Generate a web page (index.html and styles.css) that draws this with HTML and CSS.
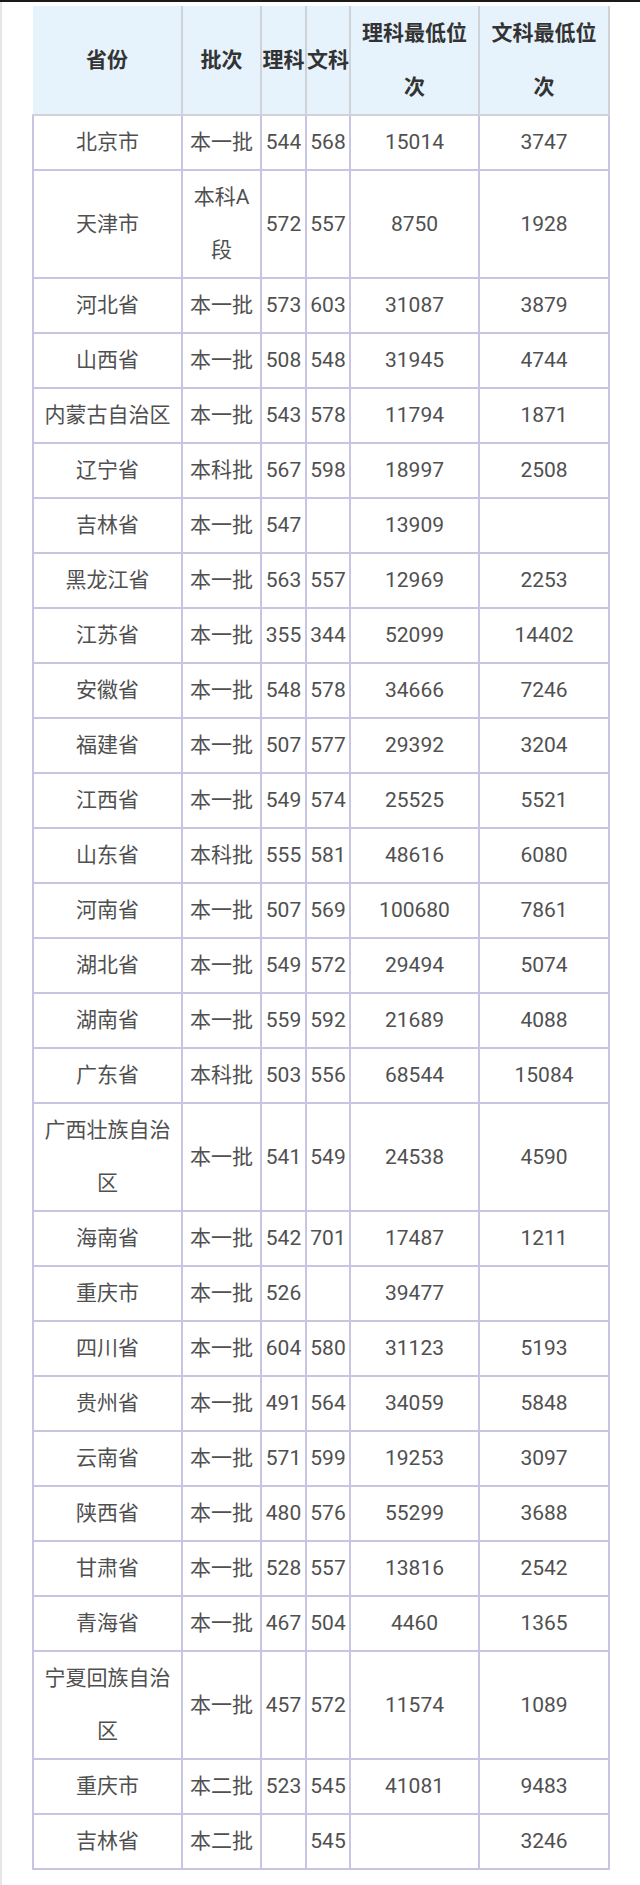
FILE: index.html
```html
<!DOCTYPE html>
<html lang="zh">
<head>
<meta charset="utf-8">
<title>分数线</title>
<link rel="stylesheet" href="styles.css">
</head>
<body>
<div class="topbar"></div>
<div class="page">
<table class="score">
<colgroup>
<col class="c-prov"><col class="c-batch"><col class="c-sci"><col class="c-art"><col class="c-rank"><col class="c-rank2">
</colgroup>
<thead>
<tr><th>省份</th><th>批次</th><th class="tight">理科</th><th class="tight">文科</th><th>理科最低位次</th><th>文科最低位次</th></tr>
</thead>
<tbody>
<tr><td>北京市</td><td>本一批</td><td>544</td><td>568</td><td>15014</td><td>3747</td></tr>
<tr><td>天津市</td><td>本科A段</td><td>572</td><td>557</td><td>8750</td><td>1928</td></tr>
<tr><td>河北省</td><td>本一批</td><td>573</td><td>603</td><td>31087</td><td>3879</td></tr>
<tr><td>山西省</td><td>本一批</td><td>508</td><td>548</td><td>31945</td><td>4744</td></tr>
<tr><td>内蒙古自治区</td><td>本一批</td><td>543</td><td>578</td><td>11794</td><td>1871</td></tr>
<tr><td>辽宁省</td><td>本科批</td><td>567</td><td>598</td><td>18997</td><td>2508</td></tr>
<tr><td>吉林省</td><td>本一批</td><td>547</td><td></td><td>13909</td><td></td></tr>
<tr><td>黑龙江省</td><td>本一批</td><td>563</td><td>557</td><td>12969</td><td>2253</td></tr>
<tr><td>江苏省</td><td>本一批</td><td>355</td><td>344</td><td>52099</td><td>14402</td></tr>
<tr><td>安徽省</td><td>本一批</td><td>548</td><td>578</td><td>34666</td><td>7246</td></tr>
<tr><td>福建省</td><td>本一批</td><td>507</td><td>577</td><td>29392</td><td>3204</td></tr>
<tr><td>江西省</td><td>本一批</td><td>549</td><td>574</td><td>25525</td><td>5521</td></tr>
<tr><td>山东省</td><td>本科批</td><td>555</td><td>581</td><td>48616</td><td>6080</td></tr>
<tr><td>河南省</td><td>本一批</td><td>507</td><td>569</td><td>100680</td><td>7861</td></tr>
<tr><td>湖北省</td><td>本一批</td><td>549</td><td>572</td><td>29494</td><td>5074</td></tr>
<tr><td>湖南省</td><td>本一批</td><td>559</td><td>592</td><td>21689</td><td>4088</td></tr>
<tr><td>广东省</td><td>本科批</td><td>503</td><td>556</td><td>68544</td><td>15084</td></tr>
<tr><td>广西壮族自治区</td><td>本一批</td><td>541</td><td>549</td><td>24538</td><td>4590</td></tr>
<tr><td>海南省</td><td>本一批</td><td>542</td><td>701</td><td>17487</td><td>1211</td></tr>
<tr><td>重庆市</td><td>本一批</td><td>526</td><td></td><td>39477</td><td></td></tr>
<tr><td>四川省</td><td>本一批</td><td>604</td><td>580</td><td>31123</td><td>5193</td></tr>
<tr><td>贵州省</td><td>本一批</td><td>491</td><td>564</td><td>34059</td><td>5848</td></tr>
<tr><td>云南省</td><td>本一批</td><td>571</td><td>599</td><td>19253</td><td>3097</td></tr>
<tr><td>陕西省</td><td>本一批</td><td>480</td><td>576</td><td>55299</td><td>3688</td></tr>
<tr><td>甘肃省</td><td>本一批</td><td>528</td><td>557</td><td>13816</td><td>2542</td></tr>
<tr><td>青海省</td><td>本一批</td><td>467</td><td>504</td><td>4460</td><td>1365</td></tr>
<tr><td>宁夏回族自治区</td><td>本一批</td><td>457</td><td>572</td><td>11574</td><td>1089</td></tr>
<tr><td>重庆市</td><td>本二批</td><td>523</td><td>545</td><td>41081</td><td>9483</td></tr>
<tr><td>吉林省</td><td>本二批</td><td></td><td>545</td><td></td><td>3246</td></tr>
</tbody>
</table>
</div>
</body>
</html>
```
FILE: styles.css
```css
html, body {
  margin: 0;
  padding: 0;
  background: #ffffff;
}
body {
  font-family: Roboto, "Noto Sans CJK SC", sans-serif;
  color: #505050;
}
.topbar {
  height: 2px;
  background: #1a1a1a;
}
.page {
  border-left: 2px solid #e6e6e6;
  padding: 4px 0 40px 30px;
}
.score {
  border-collapse: collapse;
  table-layout: fixed;
  width: 576px;
  font-size: 21px;
  line-height: 53px;
}
.c-prov { width: 149px; }
.c-batch { width: 79px; }
.c-sci { width: 45px; }
.c-art { width: 44px; }
.c-rank { width: 129px; }
.c-rank2 { width: 130px; }
.score th,
.score td {
  text-align: center;
  vertical-align: middle;
  padding: 0 1px;
  word-break: break-all;
}
.score th {
  background: #e6f2fc;
  color: #333333;
  font-weight: bold;
  border: 2px solid #cfd3d8;
  border-top: none;
  line-height: 54px;
  padding: 0 3px;
}
.score th.tight {
  padding: 0;
  white-space: nowrap;
  overflow: visible;
}
.score th:first-child { border-left: none; }
.score td {
  border: 2px solid #c8c5e2;
}
```
